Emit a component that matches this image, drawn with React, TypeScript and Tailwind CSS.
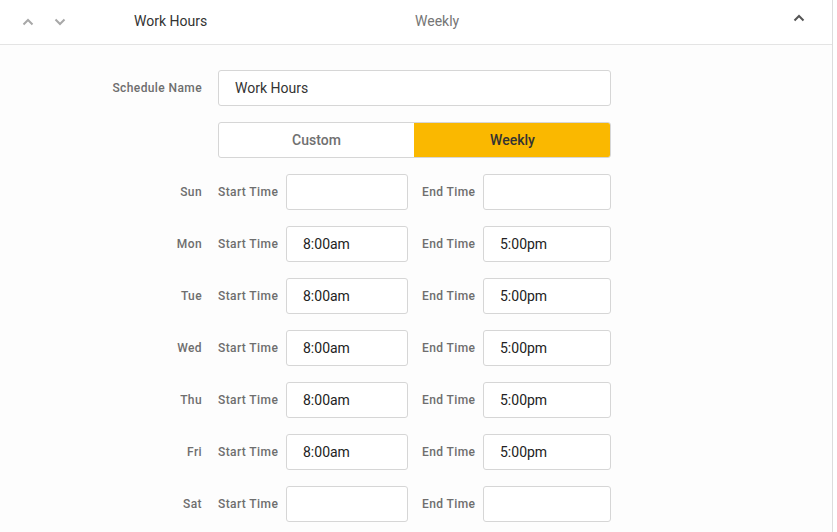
import React from 'react';

const days = [
  { day: 'Sun', start: '', end: '' },
  { day: 'Mon', start: '8:00am', end: '5:00pm' },
  { day: 'Tue', start: '8:00am', end: '5:00pm' },
  { day: 'Wed', start: '8:00am', end: '5:00pm' },
  { day: 'Thu', start: '8:00am', end: '5:00pm' },
  { day: 'Fri', start: '8:00am', end: '5:00pm' },
  { day: 'Sat', start: '', end: '' },
];

function Chevron({ up, className }: { up?: boolean; className?: string }) {
  return (
    <svg width="14" height="14" viewBox="0 0 14 14" className={className}>
      <path
        d={up ? 'M2.5 9.5 L7 5 L11.5 9.5' : 'M2.5 4.5 L7 9 L11.5 4.5'}
        fill="none"
        stroke="currentColor"
        strokeWidth="2"
      />
    </svg>
  );
}

const label = 'text-[12px] font-medium text-[#6e6e6e] tracking-[0.4px]';

export default function App() {
  return (
    <div className="w-[833px] h-[532px] bg-white border-r border-[#dcdcdc] font-['Roboto',sans-serif] overflow-hidden">
      {/* header */}
      <div className="h-[45px] flex items-center border-b border-[#e4e4e4] bg-white pb-px">
        <div className="flex items-center gap-[18px] pl-[21px] w-[134px]">
          <Chevron up className="text-[#a8a8a8]" />
          <Chevron className="text-[#a8a8a8]" />
        </div>
        <div className="w-[281px] text-[14px] text-[#333]">Work Hours</div>
        <div className="flex-1 text-[14px] text-[#757575]">Weekly</div>
        <Chevron up className="text-[#555] mr-[26px] -mt-[8px]" />
      </div>

      {/* body */}
      <div className="bg-[#fdfdfd] pt-[25px] h-full flex flex-col gap-4">
        <div className="flex items-center">
          <div className={`w-[202px] text-right ${label}`}>Schedule Name</div>
          <div className="ml-4 w-[393px] h-[36px] flex items-center px-4 border border-[#d6d6d6] rounded-[3px] bg-white text-[14px] text-[#333]">
            Work Hours
          </div>
        </div>

        <div className="flex">
          <div className="ml-[218px] w-[393px] h-[36px] flex rounded-[3px] overflow-hidden border border-[#d6d6d6] bg-white">
            <div className="w-[195px] flex items-center justify-center text-[14px] font-medium text-[#707070]">Custom</div>
            <div className="flex-1 -my-px -mr-px flex items-center justify-center bg-[#fab800] text-[14px] font-medium text-[#333]">
              Weekly
            </div>
          </div>
        </div>

        {days.map(d => (
          <div key={d.day} className="flex items-center h-[36px]">
            <div className={`w-[202px] text-right ${label}`}>{d.day}</div>
            <div className={`ml-4 w-[60px] whitespace-nowrap ${label}`}>Start Time</div>
            <div className="ml-2 w-[122px] h-[36px] flex items-center px-4 border border-[#d6d6d6] rounded-[3px] bg-white text-[14px] text-[#222]">
              {d.start}
            </div>
            <div className={`ml-[14px] w-[53px] whitespace-nowrap ${label}`}>End Time</div>
            <div className="ml-2 w-[128px] h-[36px] flex items-center px-4 border border-[#d6d6d6] rounded-[3px] bg-white text-[14px] text-[#222]">
              {d.end}
            </div>
          </div>
        ))}
      </div>
    </div>
  );
}
